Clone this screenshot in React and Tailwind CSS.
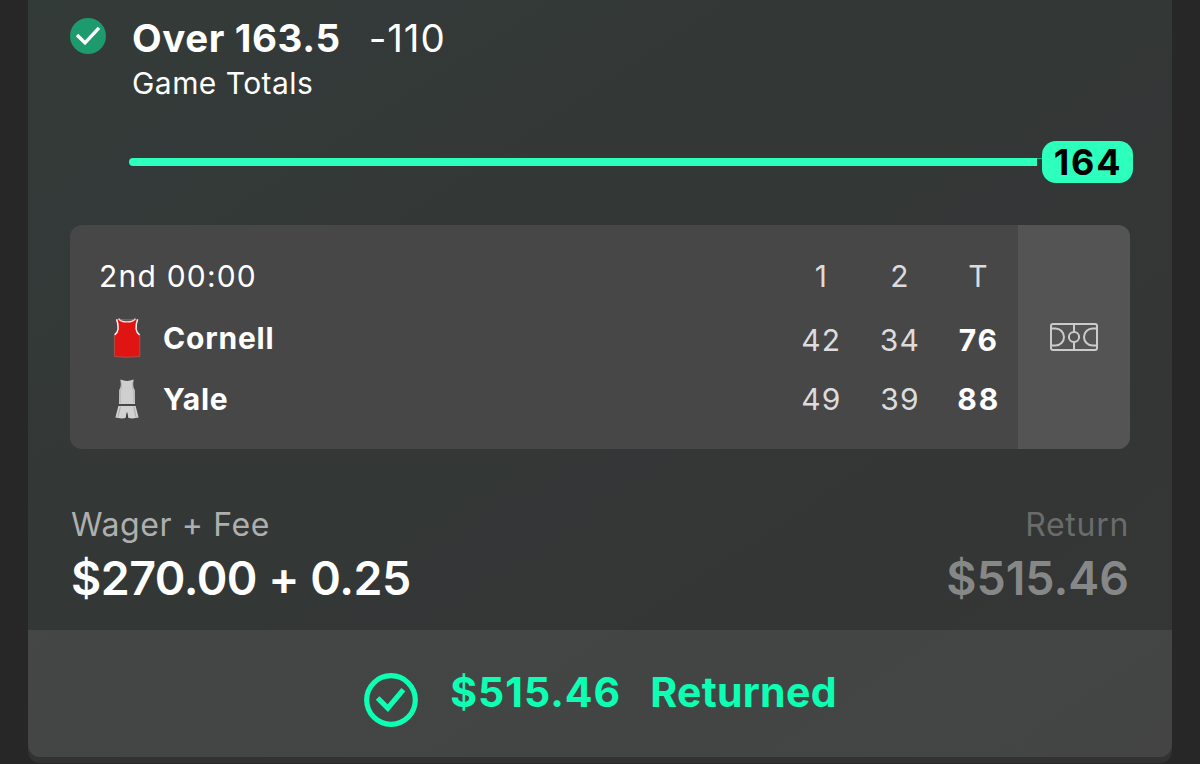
import React from "react";

const rows = [
  { name: "Cornell", kit: "jersey", scores: ["42", "34"], total: "76" },
  { name: "Yale", kit: "uniform", scores: ["49", "39"], total: "88" },
];

function CheckBadge() {
  return (
    <svg className="size-9 shrink-0" viewBox="0 0 36 36" fill="none">
      <circle cx="18" cy="18" r="18" fill="#1d9a6e" />
      <path d="M7 17 L15 24.9 L29 9.8" stroke="#fff" strokeWidth="3.4" />
    </svg>
  );
}

function CheckRing() {
  return (
    <svg className="size-[54px] shrink-0" viewBox="0 0 54 54" fill="none" stroke="#0dffb4">
      <circle cx="27" cy="27" r="24.3" strokeWidth="5.2" />
      <path d="M13.6 25 L23.8 35.2 L39.4 16.6" strokeWidth="5.2" />
    </svg>
  );
}

function Jersey() {
  return (
    <svg className="h-10 w-7" viewBox="0 0 28 40" fill="none">
      <path d="M6 1 C8 5.4 20 5.4 22 1 L24.4 2 C22.8 8 22.8 14 26.8 17 V38.5 Q14 40 1.4 38.5 V17 C5.4 14 5.4 8 3.8 2 Z" fill="#e01513" />
      <path d="M1.4 17 V38.5 Q14 40 26.8 38.5 V17" stroke="#a8544f" strokeWidth="0.9" />
      <path d="M3.6 1.2 C6 8 5.6 14 1.6 16.8 M24.6 1.2 C22.2 8 22.6 14 26.6 16.8" stroke="#fff3f1" strokeWidth="1.5" />
      <path d="M5.6 0.6 C8 5 20 5 22.4 0.6" stroke="#f7dcd9" strokeWidth="1.4" />
      <path d="M6.6 1.1 C9 2.2 19 2.2 21.6 1.1" stroke="#a98a87" strokeWidth="0.7" />
    </svg>
  );
}

function Uniform() {
  return (
    <svg className="h-10 w-7" viewBox="0 0 28 40" fill="none">
      <path d="M7.4 0.6 Q14 3.4 20.6 0.6 C19.8 6 20.2 9 21.8 11 L22 25 H6 L6.2 11 C7.8 9 8.2 6 7.4 0.6 Z" fill="#cfcfcf" />
      <path d="M19.6 3 C19 8 19.6 10 20.8 12 V24 M8.4 3 C9 8 8.4 10 7.2 12 V24" stroke="#b4b4b4" strokeWidth="1" />
      <path d="M5.4 27 H22.6 L25.6 38.6 Q20 40 15.2 39 L14 33 L12.8 39 Q8 40 2.4 38.6 Z" fill="#d2d2d2" />
      <path d="M7.4 28 L4.8 38 M20.8 28 L23 38" stroke="#a9a9a9" strokeWidth="1" />
      <path d="M14 33 L12.6 39.2 H15.4 Z" fill="#3c3c3c" />
      <path d="M5.4 26 H22.6" stroke="#474747" strokeWidth="1.3" />
    </svg>
  );
}

function Court() {
  return (
    <svg className="h-7 w-12" viewBox="0 0 48 28" fill="none" stroke="#cbcbcb" strokeWidth="2">
      <rect x="1" y="1" width="46" height="26" rx="2" />
      <path d="M24 1 V8.8 M24 19.2 V27" />
      <circle cx="24" cy="14" r="5.1" />
      <path d="M2 5.4 H5.4 A8.6 8.6 0 0 1 5.4 22.6 H2 M46 5.4 H42.6 A8.6 8.6 0 0 0 42.6 22.6 H46" />
    </svg>
  );
}

export default function App() {
  return (
    <div className="h-[764px] w-[1200px] overflow-hidden bg-[#272727] px-7 font-['Inter',sans-serif] text-white">
      <div className="h-[763px] rounded-b-xl bg-[#323232]">
        <div className="flex h-[757px] flex-col overflow-hidden rounded-b-xl bg-linear-to-br from-[#333b39] via-[#333736] to-[#353535]">
          <div className="flex h-[630px] flex-col px-[42px] pt-[18px]">
            <div className="flex gap-[26px]">
              <CheckBadge />
              <div className="flex flex-col whitespace-nowrap">
                <div className="flex h-10 items-center gap-[28px] text-[38.5px] leading-10">
                  <span className="font-bold tracking-[0.6px]">Over 163.5</span>
                  <span className="font-normal tracking-[0.9px]">-110</span>
                </div>
                <div className="mt-[9px] text-[30px] leading-8 tracking-[0.45px]">Game Totals</div>
              </div>
            </div>

            <div className="-mr-[3px] mt-[42px] ml-[59px] flex h-[42px] items-center">
              <div className="h-2 w-[908px] rounded-l-full bg-[#2dffbc]" />
              <div className="mb-[7px] h-px flex-1 bg-[#27a47e]" />
              <div className="flex h-[42px] w-[91px] items-center justify-center rounded-[14px] bg-[#2dffbc] pl-px text-[36px] font-bold tracking-[1.8px] text-black">
                164
              </div>
            </div>

            <div className="mt-[42px] flex h-56 overflow-hidden rounded-xl bg-[#474747]">
              <div className="flex w-[948px] flex-col pt-5 pl-[29px] text-[30px] leading-[62px] tracking-[1.2px]">
                <div className="flex h-[62px] items-center">
                  <div className="flex-1 tracking-[1.2px]">2nd 00:00</div>
                  <div className="grid w-[236px] grid-cols-3 text-center text-[#dcdcdc]">
                    <span>1</span>
                    <span>2</span>
                    <span>T</span>
                  </div>
                </div>
                {rows.map((r) => (
                  <div key={r.name} className="flex h-[61px] items-center">
                    <div className="flex flex-1 items-center gap-[22px] pl-[14px] font-bold tracking-[0.8px]">
                      {r.kit === "jersey" ? <Jersey /> : <Uniform />}
                      <span>{r.name}</span>
                    </div>
                    <div
                      className={
                        "grid w-[236px] grid-cols-3 text-center text-[#dcdcdc] " +
                        (r.kit === "jersey" ? "pt-1" : "")
                      }
                    >
                      {r.scores.map((s) => (
                        <span key={s}>{s}</span>
                      ))}
                      <span className="font-bold tracking-[1.8px] text-white">{r.total}</span>
                    </div>
                  </div>
                ))}
              </div>
              <div className="flex flex-1 items-center justify-center bg-[#545454]">
                <Court />
              </div>
            </div>

            <div className="mt-14 flex justify-between whitespace-nowrap">
              <div className="pl-px">
                <div className="text-[32px] leading-10 tracking-[0.6px] text-[#aeb0af]">Wager + Fee</div>
                <div className="mt-[5px] text-[46.5px] leading-[56px] font-semibold tracking-[-0.5px]">$270.00 + 0.25</div>
              </div>
              <div className="pr-px text-right">
                <div className="text-[32px] leading-10 tracking-[0.7px] text-[#6a6c6b]">Return</div>
                <div className="mt-[5px] text-[46.5px] leading-[56px] font-semibold text-[#868888]">$515.46</div>
              </div>
            </div>
          </div>

          <div className="flex h-[127px] justify-center bg-white/8 pl-px whitespace-nowrap text-[#0dffb4]">
            <div className="mt-[43px]">
              <CheckRing />
            </div>
            <div className="mt-[37px] ml-8 flex h-[52px] items-center gap-[29px] text-[41px] font-bold">
              <span className="tracking-[1px]">$515.46</span>
              <span className="tracking-[0.3px]">Returned</span>
            </div>
          </div>
        </div>
      </div>
    </div>
  );
}
